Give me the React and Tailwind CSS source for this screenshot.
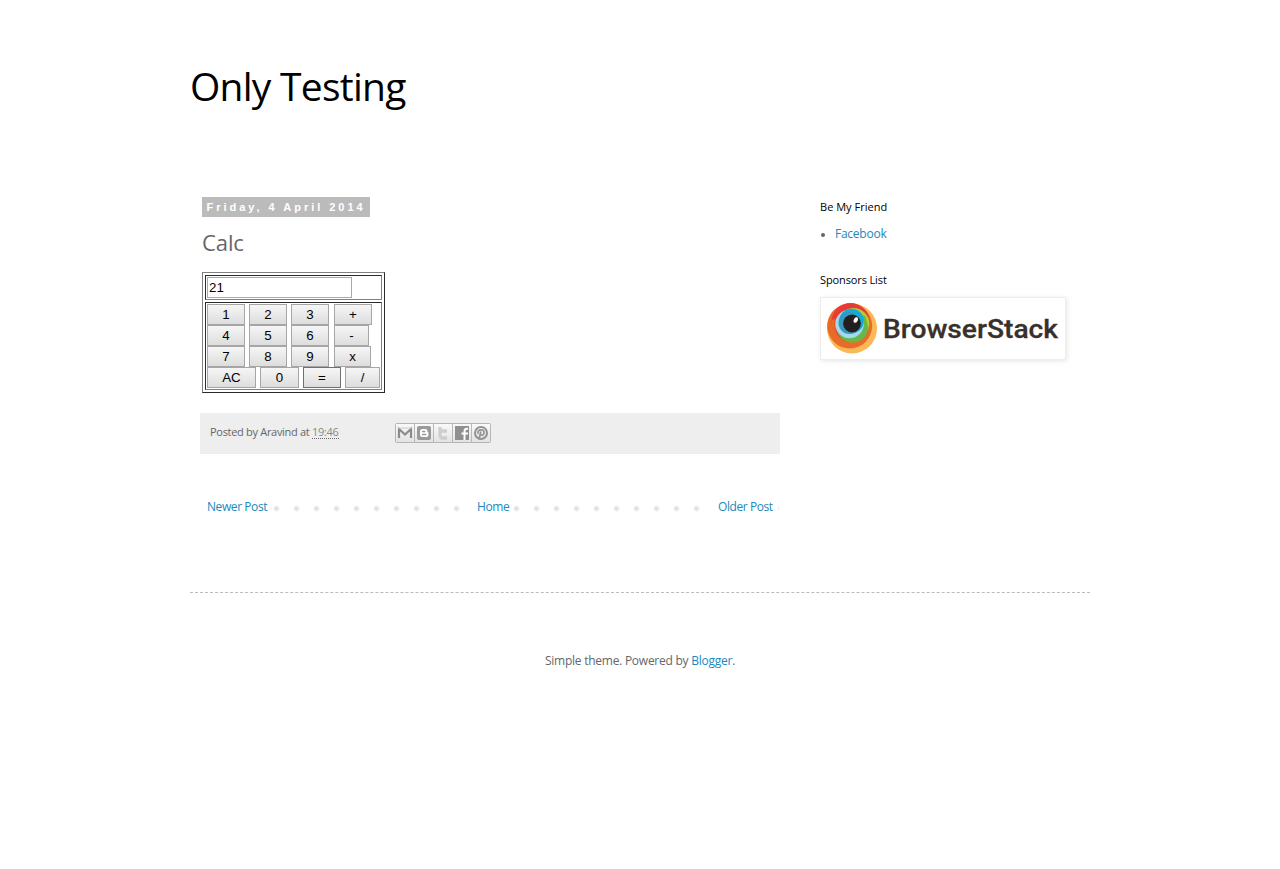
const BODY = 'font-["Open_Sans","Noto_Sans",sans-serif]';

function Key({ label, width, gap = 'mr-[4px]', active = false }) {
  return (
    <button
      className={`h-[21px] shrink-0 border bg-linear-to-b from-[#f6f6f6] to-[#dddddd] text-center text-[13.33px] leading-[18px] text-black ${active ? 'border-[#707070]' : 'border-[#a6a6a6]'} ${width} ${gap}`}
    >
      {label}
    </button>
  );
}

function Calculator() {
  return (
    <div className='flex h-[121px] w-[183px] flex-col gap-[2px] border border-t-[#808080] border-r-[#2b2b2b] border-b-[#2b2b2b] border-l-[#808080] p-[2px] font-["Liberation_Sans",sans-serif]'>
      <div className="h-[25px] border border-t-[#2b2b2b] border-r-[#808080] border-b-[#808080] border-l-[#2b2b2b] p-px">
        <input
          readOnly
          value="21"
          className="block h-[21px] w-[145px] border border-[#a9a9a9] bg-white px-px text-[13.33px] text-black outline-none"
        />
      </div>
      <div className="h-[88px] border border-t-[#2b2b2b] border-r-[#808080] border-b-[#808080] border-l-[#2b2b2b] p-px">
        <div className="flex">
          <Key label="1" width="w-[38px]" />
          <Key label="2" width="w-[38px]" />
          <Key label="3" width="w-[38px]" gap="mr-[5px]" />
          <Key label="+" width="w-[38px]" />
        </div>
        <div className="flex">
          <Key label="4" width="w-[38px]" />
          <Key label="5" width="w-[38px]" />
          <Key label="6" width="w-[38px]" gap="mr-[5px]" />
          <Key label="-" width="w-[35px]" />
        </div>
        <div className="flex">
          <Key label="7" width="w-[38px]" />
          <Key label="8" width="w-[38px]" />
          <Key label="9" width="w-[38px]" gap="mr-[5px]" />
          <Key label="x" width="w-[37px]" />
        </div>
        <div className="flex">
          <Key label="AC" width="w-[49px]" />
          <Key label="0" width="w-[39px]" />
          <Key label="=" width="w-[38px]" active />
          <Key label="/" width="w-[35px]" gap="mr-0" />
        </div>
      </div>
    </div>
  );
}

function ShareButtons() {
  return (
    <svg className="block h-[20px] w-[96px]" viewBox="0 0 96 20">
      <defs>
        <linearGradient id="share" x1="0" y1="0" x2="0" y2="1">
          <stop offset="0" stopColor="#fafafa" />
          <stop offset="1" stopColor="#e2e2e2" />
        </linearGradient>
      </defs>
      <rect x="0.5" y="0.5" width="95" height="19" rx="1" fill="url(#share)" stroke="#b5b5b5" />
      <path d="M19.5 1v18M38.5 1v18M57.5 1v18M76.5 1v18" stroke="#b8b8b8" />
      {/* Gmail */}
      <path d="M4 15V6l6 5.500L16 6v9" fill="none" stroke="#8b8b8b" strokeWidth="2.200" />
      <path d="M3 5h14" stroke="#cccccc" strokeWidth="1" />
      {/* Blogger */}
      <rect x="22" y="3" width="14" height="14" rx="2" fill="#999999" />
      <path
        d="M27.500 6h2.600a2.400 2.400 0 0 1 2.400 2.400c0 .8.500 1 1 1v1.800a2.700 2.700 0 0 1-2.700 2.800h-3.300a2.500 2.500 0 0 1-2.500-2.500v-3a2.500 2.500 0 0 1 2.500-2.500z"
        fill="#fff"
      />
      <path d="M27.500 8.500h2.300M27.500 11.500h3.300" stroke="#999" strokeWidth="1.300" strokeLinecap="round" />
      {/* Twitter */}
      <path d="M45 4v8.500a2.500 2.500 0 0 0 2.500 2.500H52M45 8h7" fill="none" stroke="#cecece" strokeWidth="3.300" />
      {/* Facebook */}
      <rect x="60" y="3" width="14" height="14" fill="#8f8f8f" />
      <path d="M69.500 17V8.500c0-2 .8-2.700 2.300-2.700H73M66.500 10.500H73" fill="none" stroke="#fff" strokeWidth="2" />
      {/* Pinterest */}
      <circle cx="86" cy="10" r="6" fill="none" stroke="#929292" strokeWidth="2" />
      <path
        d="M85.800 8.500l-1.800 8M83.300 10.800c-1.200-2.300.4-4 2.800-4 2 0 3.100 1.200 3 2.800-.2 2.200-2.100 3.300-3.700 2"
        fill="none"
        stroke="#929292"
        strokeWidth="1.700"
      />
    </svg>
  );
}

function SponsorLogo() {
  return (
    <a className="flex h-[63px] w-[246px] border border-[#eeeeee] bg-white shadow-[1px_1px_5px_rgba(0,0,0,0.1)]">
      <svg className="h-[61px] w-[244px]" viewBox="0 0 244 61">
        <circle cx="31" cy="30.500" r="25" fill="#f9b957" />
        <circle cx="28.700" cy="28" r="22.500" fill="#ea6b27" />
        <circle cx="29.500" cy="24" r="19" fill="#e73b37" />
        <path d="M10.500 22a19.500 19.500 0 0 0 36 12L31 18z" fill="#ea6b27" />
        <circle cx="31" cy="26.500" r="17.500" fill="#e73b37" />
        <circle cx="32.500" cy="26" r="16" fill="#b4cc31" />
        <path d="M15.500 27a16 16 0 0 0 32 3L44 18 31 14z" fill="#66b848" />
        <circle cx="28.500" cy="26" r="14.300" fill="#a3d9ec" />
        <circle cx="30.500" cy="23" r="12.300" fill="#15aadc" />
        <circle cx="28.500" cy="25" r="11" fill="#3897bd" />
        <circle cx="31" cy="25.500" r="8.900" fill="#231f20" />
        <ellipse cx="34.800" cy="22" rx="2" ry="2.900" fill="#fff" transform="rotate(25 34.800 22)" />
        <text
          x="62"
          y="40"
          textLength="175"
          lengthAdjust="spacingAndGlyphs"
          fill="#39302b"
          stroke="#39302b"
          strokeWidth="0.300"
          className='font-["Roboto",sans-serif] text-[26px] font-medium'
        >
          BrowserStack
        </text>
      </svg>
    </a>
  );
}

export default function App() {
  return (
    <div className={`min-h-[869px] bg-white text-[12px] text-[#666666] ${BODY}`}>
      <div className="mx-auto w-[900px]">
        <header className="h-[197px] pt-[58px]">
          <h1 className="text-[39px] leading-[56px] font-normal tracking-[-0.75px] text-black">Only Testing</h1>
        </header>

        <div className="flex h-[395px]">
          <main className="ml-[10px] w-[580px]">
            <div className="pl-[2px]">
              <h2 className='h-[20px] w-[168px] bg-[#bbbbbb] pl-[4.5px] font-["Liberation_Sans",sans-serif] text-[11px] leading-[20px] font-bold tracking-[2.97px] whitespace-nowrap text-white'>
                Friday, 4 April 2014
              </h2>
              <h3 className="mt-[10px] mb-[15px] h-[30px] text-[22px] leading-[30px] tracking-[-0.1px]">Calc</h3>
              <Calculator />
            </div>
            <div className="mt-[20px] flex h-[41px] bg-[#eeeeee] pl-[10px]">
              <div className="w-[185px] pt-[10px] text-[11px] leading-[18px] tracking-[-0.3px] whitespace-nowrap">
                Posted by Aravind at{' '}
                <abbr className="inline-block h-[14px] border-b border-dotted border-[#666666] leading-[14px] text-[#888888]">19:46</abbr>
              </div>
              <div className="pt-[10px]">
                <ShareButtons />
              </div>
            </div>
            <nav className="mt-[43px] flex h-[20px] items-center justify-between bg-[radial-gradient(circle_at_10px_10px,#e2e2e2_2.2px,transparent_2.9px)] bg-[length:20px_20px] bg-[position:6.5px_1.5px] px-[2px] leading-[20px] tracking-[-0.42px] whitespace-nowrap text-[#2288bb]">
              <a className="w-[70px] bg-white pl-[5px]">Newer Post</a>
              <a className="w-[41px] bg-white pl-[5px]">Home</a>
              <a className="w-[65px] bg-white pl-[5px]">Older Post</a>
            </nav>
          </main>

          <aside className="ml-[40px] w-[260px]">
            <h2 className="h-[20px] text-[11px] leading-[20px] font-medium tracking-[0.02px] text-black">Be My Friend</h2>
            <ul className="mt-[7px] flex h-[20px] items-center text-[12px] leading-[20px]">
              <li className="flex items-center">
                <span className="mt-[2px] mr-[10px] ml-px size-[4px] rounded-full bg-[#666666]" />
                <a className="tracking-[-0.25px] text-[#2288bb]">Facebook</a>
              </li>
            </ul>
            <h2 className="mt-[26px] mb-[7px] h-[20px] text-[11px] leading-[20px] font-medium tracking-[-0.12px] text-black">
              Sponsors List
            </h2>
            <SponsorLogo />
          </aside>
        </div>

        <footer className="border-t border-dashed border-[#bbbbbb] pt-[58px] text-center leading-[20px] tracking-[-0.25px]">
          Simple theme. Powered by <a className="text-[#2288bb]">Blogger</a>.
        </footer>
      </div>
    </div>
  );
}
